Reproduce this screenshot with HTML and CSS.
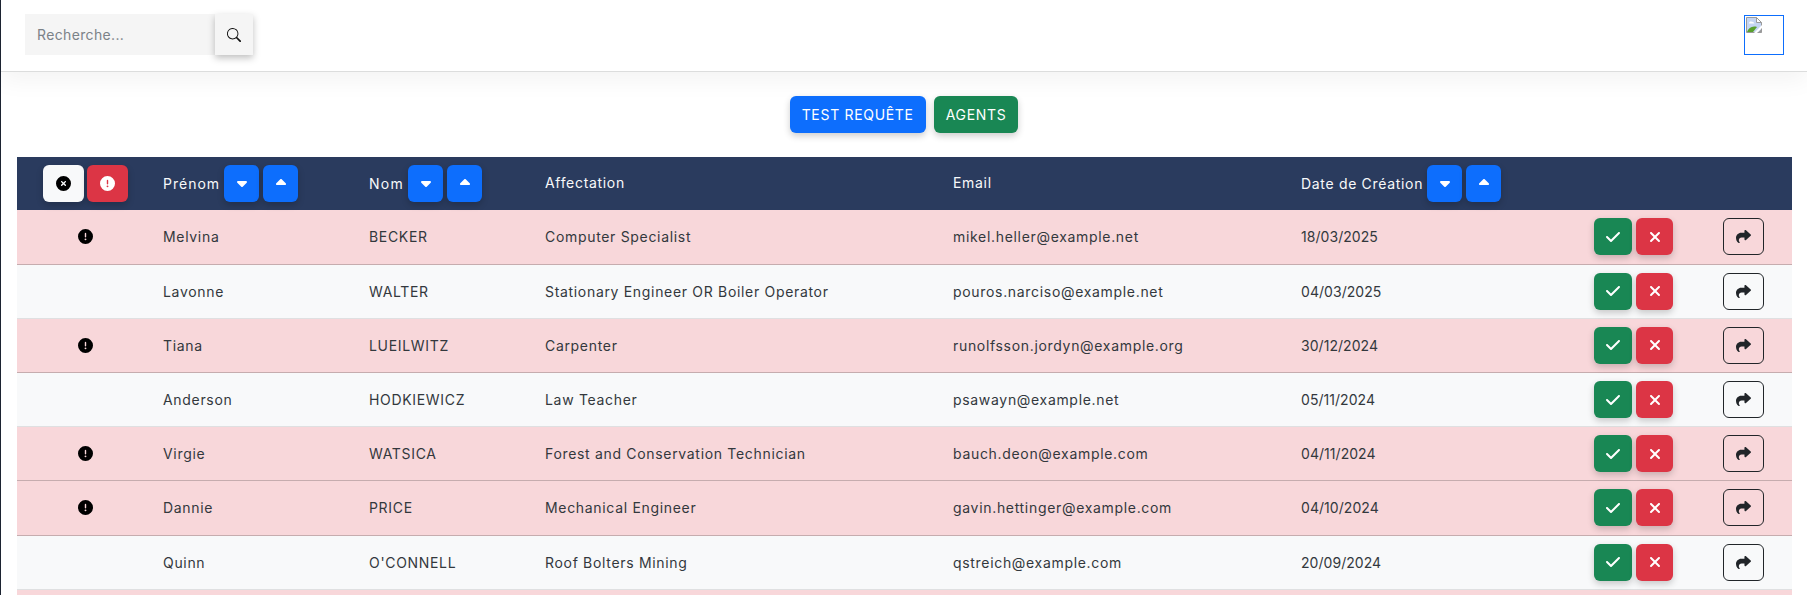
FILE: index.html
```html
<!DOCTYPE html>
<html lang="fr">
<head>
    <meta charset="UTF-8">
    <meta name="viewport" content="width=device-width, initial-scale=1.0">
    <title>Demandes</title>
    <link rel="stylesheet" href="styles.css">
</head>
<body>
    <svg class="defs" aria-hidden="true">
        <symbol id="i-search" viewBox="0 0 16 16"><path d="M11.742 10.344a6.5 6.5 0 1 0-1.397 1.398h-.001c.03.04.062.078.098.115l3.85 3.85a1 1 0 0 0 1.415-1.414l-3.85-3.85a1.007 1.007 0 0 0-.115-.1zM12 6.5a5.5 5.5 0 1 1-11 0 5.5 5.5 0 0 1 11 0z"/></symbol>
        <symbol id="i-down" viewBox="0 256 320 256"><path d="M182.6 470.6c-12.5 12.5-32.8 12.5-45.3 0l-128-128c-9.2-9.2-11.9-22.9-6.9-34.9s16.6-19.8 29.6-19.8H288c12.9 0 24.6 7.8 29.6 19.8s2.2 25.7-6.9 34.9l-128 128z"/></symbol>
        <symbol id="i-up" viewBox="0 0 320 256"><path d="M182.6 41.4c-12.5-12.5-32.8-12.5-45.3 0l-128 128c-9.2 9.2-11.9 22.9-6.9 34.9s16.6 19.8 29.6 19.8H288c12.9 0 24.6-7.8 29.6-19.8s2.2-25.7-6.9-34.9l-128-128z"/></symbol>
        <symbol id="i-excl" viewBox="0 0 512 512"><path d="M256 512A256 256 0 1 0 256 0a256 256 0 1 0 0 512zm0-384c13.3 0 24 10.7 24 24V264c0 13.3-10.7 24-24 24s-24-10.7-24-24V152c0-13.3 10.7-24 24-24zM224 352a32 32 0 1 1 64 0 32 32 0 1 1 -64 0z"/></symbol>
        <symbol id="i-cross" viewBox="0 0 512 512"><path d="M256 512A256 256 0 1 0 256 0a256 256 0 1 0 0 512zM175 175c9.4-9.4 24.6-9.4 33.9 0l47 47 47-47c9.4-9.4 24.6-9.4 33.9 0s9.4 24.6 0 33.9l-47 47 47 47c9.4 9.4 9.4 24.6 0 33.9s-24.6 9.4-33.9 0l-47-47-47 47c-9.4 9.4-24.6 9.4-33.9 0s-9.4-24.6 0-33.9l47-47-47-47c-9.4-9.4-9.4-24.6 0-33.9z"/></symbol>
        <symbol id="i-check" viewBox="0 0 448 512"><path d="M438.6 105.4c12.5 12.5 12.5 32.8 0 45.3l-256 256c-12.5 12.5-32.8 12.5-45.3 0l-128-128c-12.5-12.5-12.5-32.8 0-45.3s32.8-12.5 45.3 0L160 338.7 393.4 105.4c12.5-12.5 32.8-12.5 45.3 0z"/></symbol>
        <symbol id="i-x" viewBox="0 0 384 512"><path d="M342.6 150.6c12.5-12.5 12.5-32.8 0-45.3s-32.8-12.5-45.3 0L192 210.7 86.6 105.4c-12.5-12.5-32.8-12.5-45.3 0s-12.5 32.8 0 45.3L146.7 256 41.4 361.4c-12.5 12.5-12.5 32.8 0 45.3s32.8 12.5 45.3 0L192 301.3 297.4 406.6c12.5 12.5 32.8 12.5 45.3 0s12.5-32.8 0-45.3L237.3 256 342.6 150.6z"/></symbol>
        <symbol id="i-share" viewBox="0 0 512 512"><path d="M307 34.8c-11.5 5.1-19 16.6-19 29.2v64H176C78.8 128 0 206.8 0 304C0 417.3 81.5 467.9 100.2 478.1c2.5 1.4 5.3 1.9 8.1 1.9c10.9 0 19.7-8.9 19.7-19.7c0-7.5-4.3-14.4-9.8-19.5C108.8 431.9 96 414.4 96 384c0-53 43-96 96-96h96v64c0 12.6 7.4 24.1 19 29.2s25 3 34.4-5.4l160-144c6.7-6.1 10.6-14.7 10.6-23.8s-3.8-17.7-10.6-23.8l-160-144c-9.4-8.5-22.9-10.6-34.4-5.4z"/></symbol>
    </svg>

    <nav class="topbar">
        <form class="search">
            <input type="text" class="search-input" placeholder="Recherche...">
            <button type="button" class="search-btn"><svg class="icon-search"><use href="#i-search"/></svg></button>
        </form>
        <div class="avatar">
            <svg class="broken" viewBox="0 0 16 16">
                <path d="M.5.5h10l5 5v10H.5z" fill="#c5d5f2" stroke="#9a9a9a"/>
                <path d="M10.500.5v5h5z" fill="#fff" stroke="#9a9a9a"/>
                <path d="M3 6.500c0-1.500 1-2 2-2 1.500 0 3 .8 3.500 2z" fill="#fff"/>
                <path d="M1 15c1.500-4 5-6.500 10-5l-4 5z" fill="#58a02c"/>
                <path d="M8 16l8-8v3l-5 5z" fill="#fff"/>
                <path d="M12 15.500h3.500V12z" fill="#9a9a9a"/>
            </svg>
        </div>
    </nav>

    <div class="actions">
        <button type="button" class="btn btn-primary">TEST REQUÊTE</button>
        <button type="button" class="btn btn-success">AGENTS</button>
    </div>

    <table class="requests">
        <thead>
            <tr>
                <th class="col-flag">
                    <div class="cell-flex center">
                        <button type="button" class="btn-sq btn-light"><svg class="icon-15"><use href="#i-cross"/></svg></button>
                        <button type="button" class="btn-sq btn-danger"><svg class="icon-15"><use href="#i-excl"/></svg></button>
                    </div>
                </th>
                <th class="col-first">
                    <div class="cell-flex">Prénom
                        <button type="button" class="btn-sort"><svg class="icon-caret"><use href="#i-down"/></svg></button>
                        <button type="button" class="btn-sort"><svg class="icon-caret up"><use href="#i-up"/></svg></button>
                    </div>
                </th>
                <th class="col-last">
                    <div class="cell-flex">Nom
                        <button type="button" class="btn-sort"><svg class="icon-caret"><use href="#i-down"/></svg></button>
                        <button type="button" class="btn-sort"><svg class="icon-caret up"><use href="#i-up"/></svg></button>
                    </div>
                </th>
                <th class="col-job"><span class="th-text">Affectation</span></th>
                <th class="col-mail"><span class="th-text">Email</span></th>
                <th class="col-date">
                    <div class="cell-flex">Date de Création
                        <button type="button" class="btn-sort"><svg class="icon-caret"><use href="#i-down"/></svg></button>
                        <button type="button" class="btn-sort"><svg class="icon-caret up"><use href="#i-up"/></svg></button>
                    </div>
                </th>
                <th class="col-btns"></th>
                <th class="col-go"></th>
            </tr>
        </thead>
        <tbody>
            <tr class="row-alert">
                <td class="flag"><svg class="icon-15"><use href="#i-excl"/></svg></td>
                <td>Melvina</td><td>BECKER</td><td>Computer Specialist</td><td>mikel.heller@example.net</td><td class="date">18/03/2025</td>
                <td><div class="cell-flex"><button type="button" class="btn-ok"><svg class="icon-16"><use href="#i-check"/></svg></button><button type="button" class="btn-no"><svg class="icon-16"><use href="#i-x"/></svg></button></div></td>
                <td><button type="button" class="btn-go"><svg class="icon-15"><use href="#i-share"/></svg></button></td>
            </tr>
            <tr class="row-plain">
                <td class="flag"></td>
                <td>Lavonne</td><td>WALTER</td><td>Stationary Engineer OR Boiler Operator</td><td>pouros.narciso@example.net</td><td class="date">04/03/2025</td>
                <td><div class="cell-flex"><button type="button" class="btn-ok"><svg class="icon-16"><use href="#i-check"/></svg></button><button type="button" class="btn-no"><svg class="icon-16"><use href="#i-x"/></svg></button></div></td>
                <td><button type="button" class="btn-go"><svg class="icon-15"><use href="#i-share"/></svg></button></td>
            </tr>
            <tr class="row-alert">
                <td class="flag"><svg class="icon-15"><use href="#i-excl"/></svg></td>
                <td>Tiana</td><td>LUEILWITZ</td><td>Carpenter</td><td>runolfsson.jordyn@example.org</td><td class="date">30/12/2024</td>
                <td><div class="cell-flex"><button type="button" class="btn-ok"><svg class="icon-16"><use href="#i-check"/></svg></button><button type="button" class="btn-no"><svg class="icon-16"><use href="#i-x"/></svg></button></div></td>
                <td><button type="button" class="btn-go"><svg class="icon-15"><use href="#i-share"/></svg></button></td>
            </tr>
            <tr class="row-plain">
                <td class="flag"></td>
                <td>Anderson</td><td>HODKIEWICZ</td><td>Law Teacher</td><td>psawayn@example.net</td><td class="date">05/11/2024</td>
                <td><div class="cell-flex"><button type="button" class="btn-ok"><svg class="icon-16"><use href="#i-check"/></svg></button><button type="button" class="btn-no"><svg class="icon-16"><use href="#i-x"/></svg></button></div></td>
                <td><button type="button" class="btn-go"><svg class="icon-15"><use href="#i-share"/></svg></button></td>
            </tr>
            <tr class="row-alert">
                <td class="flag"><svg class="icon-15"><use href="#i-excl"/></svg></td>
                <td>Virgie</td><td>WATSICA</td><td>Forest and Conservation Technician</td><td>bauch.deon@example.com</td><td class="date">04/11/2024</td>
                <td><div class="cell-flex"><button type="button" class="btn-ok"><svg class="icon-16"><use href="#i-check"/></svg></button><button type="button" class="btn-no"><svg class="icon-16"><use href="#i-x"/></svg></button></div></td>
                <td><button type="button" class="btn-go"><svg class="icon-15"><use href="#i-share"/></svg></button></td>
            </tr>
            <tr class="row-alert">
                <td class="flag"><svg class="icon-15"><use href="#i-excl"/></svg></td>
                <td>Dannie</td><td>PRICE</td><td>Mechanical Engineer</td><td>gavin.hettinger@example.com</td><td class="date">04/10/2024</td>
                <td><div class="cell-flex"><button type="button" class="btn-ok"><svg class="icon-16"><use href="#i-check"/></svg></button><button type="button" class="btn-no"><svg class="icon-16"><use href="#i-x"/></svg></button></div></td>
                <td><button type="button" class="btn-go"><svg class="icon-15"><use href="#i-share"/></svg></button></td>
            </tr>
            <tr class="row-plain">
                <td class="flag"></td>
                <td>Quinn</td><td>O'CONNELL</td><td>Roof Bolters Mining</td><td>qstreich@example.com</td><td class="date">20/09/2024</td>
                <td><div class="cell-flex"><button type="button" class="btn-ok"><svg class="icon-16"><use href="#i-check"/></svg></button><button type="button" class="btn-no"><svg class="icon-16"><use href="#i-x"/></svg></button></div></td>
                <td><button type="button" class="btn-go"><svg class="icon-15"><use href="#i-share"/></svg></button></td>
            </tr>
            <tr class="row-alert">
                <td class="flag"></td>
                <td></td><td></td><td></td><td></td><td></td><td></td><td></td>
            </tr>
        </tbody>
    </table>
</body>
</html>
```

FILE: styles.css
```css
/* General Reset */
* {
    margin: 0;
    padding: 0;
    box-sizing: border-box;
    font-family: 'Inter', 'Liberation Sans', sans-serif;
}

html {
    height: 595px;
    overflow: hidden;
}

body {
    height: 595px;
    overflow: hidden;
    background: #fff;
    border-left: 1px solid #1c2331;
    color: #212529;
    font-size: 14px;
    letter-spacing: 0.68px;
}

.defs {
    display: none;
}

button {
    border: none;
    cursor: pointer;
    letter-spacing: inherit;
}

svg {
    fill: currentColor;
    display: block;
}

/* Top bar */
.topbar {
    height: 72px;
    display: flex;
    justify-content: space-between;
    align-items: center;
    padding: 0 23px 2px 24px;
    background: #fff;
    border-bottom: 1px solid #dcdddd;
    box-shadow: 0 8px 24px rgba(0, 0, 0, 0.05);
}

.search {
    display: flex;
}

.search-input {
    width: 190px;
    height: 41px;
    padding: 0 12px;
    border: none;
    background: #f5f5f5;
    color: #212529;
    font-size: 14px;
    letter-spacing: 0.35px;
}

.search-input::placeholder {
    color: #7b8288;
}

.search-btn {
    width: 38px;
    height: 41px;
    display: flex;
    align-items: center;
    justify-content: center;
    background: #f5f5f5;
    color: #111;
    box-shadow: 0 3px 7px rgba(0, 0, 0, 0.25);
}

.icon-search {
    width: 14px;
    height: 14px;
}

.avatar {
    width: 40px;
    height: 40px;
    padding: 1px;
    border: 1px solid #0d6efd;
}

.broken {
    width: 16px;
    height: 16px;
}

/* Main buttons */
.actions {
    display: flex;
    justify-content: center;
    gap: 8px;
    padding: 24px 0;
}

.btn {
    height: 37px;
    padding: 0 12px;
    border-radius: 6px;
    color: #fff;
    font-size: 14px;
    box-shadow: 0 3px 7px rgba(0, 0, 0, 0.2);
}

.btn-primary {
    background: #0d6efd;
}

.btn-success {
    background: #198754;
}

/* Table */
.requests {
    width: 1775px;
    margin-left: 16px;
    border-collapse: collapse;
    table-layout: fixed;
}

.requests th {
    height: 53px;
    padding: 0 8px;
    background: #2a3b5e;
    color: #f8f9fa;
    font-size: 14px;
    font-weight: 400;
    text-align: left;
}

.requests th.col-flag {
    padding-right: 10px;
}

.th-text {
    position: relative;
    top: -1px;
}

.requests td {
    height: 54.18px;
    padding: 0 8px;
    vertical-align: middle;
    font-size: 14px;
    color: #33383d;
}

.requests td.flag {
    padding-right: 9px;
}

.requests td.date {
    letter-spacing: 0.05px;
}

.col-flag { width: 138px; }
.col-first { width: 206px; letter-spacing: 1px; }
.col-last { width: 176px; letter-spacing: 1.3px; }
.col-job { width: 408px; }
.col-mail { width: 348px; }
.col-date { width: 293px; }
.col-btns { width: 129px; }
.col-go { width: 77px; }

.row-alert td {
    background: #f8d7da;
    border-bottom: 1px solid #c6acae;
}

.row-plain td {
    background: #f8f9fa;
    border-bottom: 1px solid #dfe0e1;
}

.cell-flex {
    display: flex;
    align-items: center;
    gap: 4px;
}

.cell-flex.center {
    justify-content: center;
    gap: 3px;
}

.flag svg {
    margin: 0 auto;
    color: #000;
}

.icon-15 {
    width: 15px;
    height: 15px;
}

.icon-16 {
    width: 16px;
    height: 16px;
}

.icon-caret {
    width: 10px;
    height: 8px;
}

.icon-caret.up {
    margin-bottom: 3px;
}

.btn-sq,
.btn-sort,
.btn-ok,
.btn-no,
.btn-go {
    height: 37px;
    display: flex;
    align-items: center;
    justify-content: center;
    border-radius: 6px;
    box-shadow: 0 3px 7px rgba(0, 0, 0, 0.2);
}

.btn-sq {
    width: 41px;
}

.btn-light {
    background: #f8f9fa;
    color: #000;
}

.btn-danger {
    background: #dc3545;
    color: #fff;
}

.btn-sort {
    width: 35px;
    background: #0d6efd;
    color: #fff;
}

.btn-ok {
    width: 38px;
    background: #198754;
    color: #fff;
}

.btn-no {
    width: 37px;
    background: #dc3545;
    color: #fff;
}

.btn-go {
    width: 41px;
    border: 1px solid #212529;
    background: transparent;
    color: #212529;
    box-shadow: none;
}
```
